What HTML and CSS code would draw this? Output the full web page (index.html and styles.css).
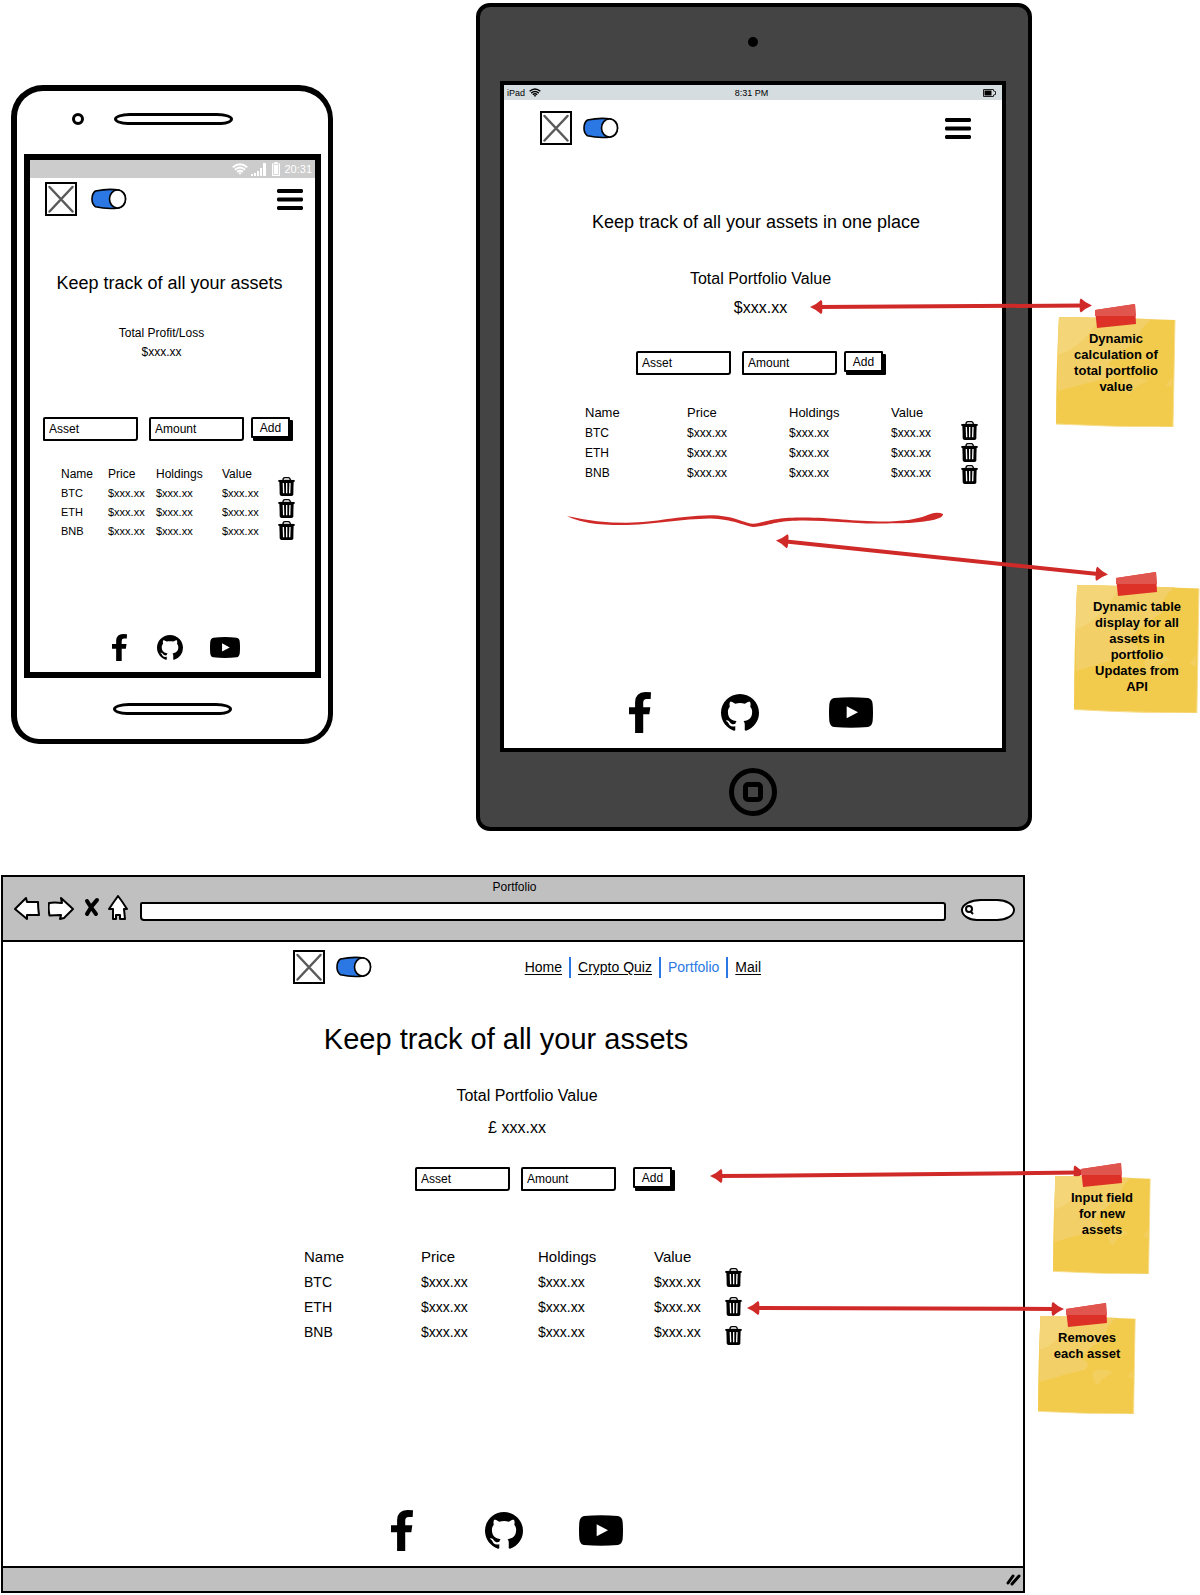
FILE: index.html
```html
<!DOCTYPE html>
<html lang="en">
<head>
<meta charset="utf-8">
<meta name="viewport" content="width=device-width, initial-scale=1">
<title>Portfolio wireframes</title>
<link rel="stylesheet" href="styles.css">
</head>
<body>
<svg class="sprite" aria-hidden="true">
  <symbol id="logo" viewBox="0 0 32 34">
    <path d="M1 1L31 1L31 33L1 33Z" fill="#fff" stroke="#000" stroke-width="2"/>
    <path d="M4.500 5L27.500 29.500M27.500 5L4.500 29.500" stroke="#5a5a5a" stroke-width="2.500" stroke-linecap="round"/>
  </symbol>
  <symbol id="switch" viewBox="0 0 36 22">
    <path d="M4.500 3Q17 .3 28 2Q34.500 4 34.500 11Q34.500 18 28 20Q16 21.500 4.500 18.800Q.9 16 1 11Q1 5.500 4.500 3Z" fill="#2b78e4" stroke="#000" stroke-width="1.600"/>
    <ellipse cx="26.500" cy="11" rx="8" ry="9" fill="#fff" stroke="#000" stroke-width="1.600"/>
  </symbol>
  <symbol id="bars" viewBox="0 0 26 21">
    <path d="M1 0H25L26 1V3L25 4H1L0 3V1ZM1 8.500H25L26 9.500V11.500L25 12.500H1L0 11.500V9.500ZM1 17H25L26 18V20L25 21H1L0 20V18Z"/>
  </symbol>
  <symbol id="trash" viewBox="0 0 51 57">
    <path d="M15 9Q15 2 21 2H31Q36 2 37 9" fill="none" stroke="#000" stroke-width="4"/>
    <path fill-rule="evenodd" d="M1 9Q25 7 50 9V14L47 15Q46 35 46 53Q44 57 40 57H11Q6 57 5 52Q5 32 4 15L1 14ZM14 18L15 49H19L18 18ZM24 18V49H28V18ZM34 18L33 49H37L38 18Z"/>
  </symbol>
  <symbol id="facebook" viewBox="0 0 65 123" preserveAspectRatio="none">
    <path d="M65 1L64 21H52Q42 21 42 32V46H63L60 67H42V123H18V67H0V46H18V30Q19 1 48 0Z"/>
  </symbol>
  <symbol id="github" viewBox="0 0 16 15.700" preserveAspectRatio="none">
    <path d="M8 0C3.580 0 0 3.580 0 8c0 3.540 2.290 6.530 5.470 7.590.4.070.55-.17.55-.38 0-.19-.01-.82-.01-1.490-2.010.37-2.530-.49-2.690-.94-.09-.23-.48-.94-.82-1.130-.28-.15-.68-.52-.01-.53.63-.01 1.080.58 1.230.82.72 1.210 1.870.87 2.330.66.07-.52.28-.87.51-1.070-1.780-.2-3.640-.89-3.640-3.950 0-.87.31-1.590.82-2.150-.08-.2-.36-1.020.08-2.120 0 0 .67-.21 2.200.82.64-.18 1.320-.27 2-.27.68 0 1.360.09 2 .27 1.530-1.040 2.200-.82 2.200-.82.44 1.100.16 1.920.08 2.120.51.56.82 1.270.82 2.150 0 3.070-1.870 3.750-3.650 3.950.29.25.54.73.54 1.480 0 1.070-.01 1.930-.01 2.200 0 .21.15.46.55.38A8.013 8.013 0 0016 8c0-4.420-3.580-8-8-8z"/>
  </symbol>
  <symbol id="youtube" viewBox="0 0 132 93" preserveAspectRatio="none">
    <path fill-rule="evenodd" d="M15 3Q66 -2 117 3Q130 5 131 22Q133 46 131 72Q129 88 117 90Q66 95 15 90Q3 89 1 72Q-1 46 1 22Q3 5 15 3ZM53 28V64L87 46Z"/>
  </symbol>
  <symbol id="wifi" viewBox="0 0 30 22">
    <path d="M1.500 8Q15 -4 28.500 8M5.500 12.500Q15 4 24.500 12.500M9.500 16.500Q15 12 20.500 16.500" fill="none" stroke="currentColor" stroke-width="3.600"/>
    <path d="M12 18.500Q15 16 18 18.500L15 22Z" fill="currentColor"/>
  </symbol>
  <symbol id="paper" viewBox="0 0 120 110" preserveAspectRatio="none">
    <path d="M3 0L60 1L119 3L117 110Q58 110 0 107Q0 55 3 0Z" fill="#f2ca4c"/>
    <path d="M3 0L96 2Q80 14 84 24Q60 36 52 48Q66 52 58 60Q30 66 2 74Q1 36 3 0Z" fill="#f3d067"/>
    <path d="M3 0L44 1Q32 22 12 34L2 38Z" fill="#f4d578"/>
    <path d="M68 62Q84 58 92 64Q76 70 74 78Q64 72 68 62ZM116 60V70L110 68Z" fill="#f3cf60"/>
    <path d="M0 107Q58 110 117 110L119 3" fill="none" stroke="#f7dd8c" stroke-width="1"/>
  </symbol>
  <symbol id="tape" viewBox="0 0 41 24">
    <path d="M0 6L40 0L41 20L2 24Z" fill="#dd3128"/>
    <path d="M0 6L40 0L41 12H0Z" fill="#e0564f"/>
  </symbol>
  <symbol id="head" viewBox="0 0 13 14" overflow="visible">
    <path d="M0 7Q7 4 11 0Q13 1 12 7Q13 13 11 14Q7 10 0 7Z"/>
  </symbol>
</svg>

<main class="board">
  <section class="row row--handheld">
    <article class="phone" aria-label="Phone wireframe">
      <div class="phone-top"><span class="phone-camera"></span><span class="phone-speaker"></span></div>
      <div class="screen">
        <div class="status status--phone">
          <svg class="status-wifi" aria-hidden="true"><use href="#wifi"/></svg>
          <svg class="status-signal" viewBox="0 0 15 13" aria-hidden="true"><path d="M0 11h2v2H0zM3 10h2v3H3zM6 8h2v5H6zM9 5h2v8H9zM12 0h3v13h-3z" fill="#fff"/></svg>
          <svg class="status-cell" viewBox="0 0 8 14" aria-hidden="true"><path d="M2.500 0h3v1.500H8V14H0V1.500h2.500z" fill="#fff"/><path d="M1.500 2.500H6.500V12.500H1.500Z" fill="none" stroke="#ccc" stroke-width=".7"/></svg>
          <span>20:31</span>
        </div>
        <header class="bar">
          <svg class="logo" role="img" aria-label="Logo"><use href="#logo"/></svg>
          <label class="toggle"><input type="checkbox" checked aria-label="Theme"><svg aria-hidden="true"><use href="#switch"/></svg></label>
          <button class="menu" aria-label="Menu"><svg aria-hidden="true"><use href="#bars"/></svg></button>
        </header>
        <h2 class="title">Keep track of all your assets</h2>
        <div class="totals"><p>Total Profit/Loss</p><p>$xxx.xx</p></div>
        <form class="entry">
          <input type="text" aria-label="Asset" value="Asset">
          <input type="text" aria-label="Amount" value="Amount">
          <button type="button">Add</button>
        </form>
        <div class="holdings">
          <table>
            <colgroup><col class="c1"><col class="c2"><col class="c3"><col class="c4"></colgroup>
            <thead><tr><th>Name</th><th>Price</th><th>Holdings</th><th>Value</th></tr></thead>
            <tbody>
              <tr><td>BTC</td><td>$xxx.xx</td><td>$xxx.xx</td><td>$xxx.xx</td></tr>
              <tr><td>ETH</td><td>$xxx.xx</td><td>$xxx.xx</td><td>$xxx.xx</td></tr>
              <tr><td>BNB</td><td>$xxx.xx</td><td>$xxx.xx</td><td>$xxx.xx</td></tr>
            </tbody>
          </table>
          <div class="bins">
            <button aria-label="Remove BTC"><svg aria-hidden="true"><use href="#trash"/></svg></button>
            <button aria-label="Remove ETH"><svg aria-hidden="true"><use href="#trash"/></svg></button>
            <button aria-label="Remove BNB"><svg aria-hidden="true"><use href="#trash"/></svg></button>
          </div>
        </div>
        <footer class="social">
          <a href="#" aria-label="Facebook"><svg class="fb"><use href="#facebook"/></svg></a>
          <a href="#" aria-label="GitHub"><svg class="gh"><use href="#github"/></svg></a>
          <a href="#" aria-label="YouTube"><svg class="yt"><use href="#youtube"/></svg></a>
        </footer>
      </div>
      <div class="phone-bottom"><span class="phone-speaker"></span></div>
    </article>

    <article class="tablet" aria-label="Tablet wireframe">
      <span class="tablet-camera"></span>
      <div class="screen">
        <div class="status status--tablet">
          <span class="carrier">iPad <svg class="status-wifi" aria-hidden="true"><use href="#wifi"/></svg></span>
          <span>8:31 PM</span>
          <svg class="status-battery" viewBox="0 0 13 8" aria-hidden="true"><path d="M.5.5H10.500V2L12.500 2.500V5.500L10.500 6V7.500H.5Z" fill="none" stroke="#222"/><path d="M1.500 1.500H8.500V6.500H1.500Z"/></svg>
        </div>
        <header class="bar">
          <svg class="logo" role="img" aria-label="Logo"><use href="#logo"/></svg>
          <label class="toggle"><input type="checkbox" checked aria-label="Theme"><svg aria-hidden="true"><use href="#switch"/></svg></label>
          <button class="menu" aria-label="Menu"><svg aria-hidden="true"><use href="#bars"/></svg></button>
        </header>
        <h2 class="title">Keep track of all your assets in one place</h2>
        <div class="totals"><p>Total Portfolio Value</p><p>$xxx.xx</p></div>
        <form class="entry">
          <input type="text" aria-label="Asset" value="Asset">
          <input type="text" aria-label="Amount" value="Amount">
          <button type="button">Add</button>
        </form>
        <div class="holdings">
          <table>
            <colgroup><col class="c1"><col class="c2"><col class="c3"><col class="c4"></colgroup>
            <thead><tr><th>Name</th><th>Price</th><th>Holdings</th><th>Value</th></tr></thead>
            <tbody>
              <tr><td>BTC</td><td>$xxx.xx</td><td>$xxx.xx</td><td>$xxx.xx</td></tr>
              <tr><td>ETH</td><td>$xxx.xx</td><td>$xxx.xx</td><td>$xxx.xx</td></tr>
              <tr><td>BNB</td><td>$xxx.xx</td><td>$xxx.xx</td><td>$xxx.xx</td></tr>
            </tbody>
          </table>
          <div class="bins">
            <button aria-label="Remove BTC"><svg aria-hidden="true"><use href="#trash"/></svg></button>
            <button aria-label="Remove ETH"><svg aria-hidden="true"><use href="#trash"/></svg></button>
            <button aria-label="Remove BNB"><svg aria-hidden="true"><use href="#trash"/></svg></button>
          </div>
        </div>
        <svg class="brace" viewBox="0 0 1130 46" preserveAspectRatio="none" aria-hidden="true">
          <path d="M0 12C60 26 120 33 180 33C270 32 330 12 430 10C500 10 525 32 558 36C600 32 610 18 700 17C800 16 850 30 970 29C1030 26 1060 20 1092 6Q1114 -2 1130 6Q1132 16 1104 24C1060 32 1040 35 960 35C860 38 800 25 700 26C620 28 610 42 560 46C530 42 500 22 430 20C340 22 280 36 180 40C100 40 50 36 0 12Z"/>
        </svg>
        <footer class="social">
          <a href="#" aria-label="Facebook"><svg class="fb"><use href="#facebook"/></svg></a>
          <a href="#" aria-label="GitHub"><svg class="gh"><use href="#github"/></svg></a>
          <a href="#" aria-label="YouTube"><svg class="yt"><use href="#youtube"/></svg></a>
        </footer>
      </div>
      <span class="home"></span>
    </article>

    <aside class="notes">
      <p class="note note--total"><svg class="note-paper" aria-hidden="true"><use href="#paper"/></svg><svg class="note-tape" aria-hidden="true"><use href="#tape"/></svg><span>Dynamic calculation of total portfolio value</span></p>
      <p class="note note--table"><svg class="note-paper" aria-hidden="true"><use href="#paper"/></svg><svg class="note-tape" aria-hidden="true"><use href="#tape"/></svg><span>Dynamic table display for all assets in portfolio Updates from API</span></p>
    </aside>

    <svg class="arrows" viewBox="0 0 1200 831" preserveAspectRatio="none" aria-hidden="true">
      <path d="M818 307L1084 305.500M786 541.500L1098 574"/>
      <use href="#head" x="810" y="300" width="13" height="14"/>
      <use href="#head" width="13" height="14" transform="translate(1092 305.500) rotate(180) translate(0 -7)"/>
      <use href="#head" width="13" height="14" transform="translate(776 540.500) rotate(4) translate(0 -7)"/>
      <use href="#head" width="13" height="14" transform="translate(1108 574.500) rotate(184) translate(0 -7)"/>
    </svg>
  </section>

  <section class="row row--desktop">
    <article class="browser" aria-label="Browser wireframe">
      <div class="chrome">
        <p class="tab-title">Portfolio</p>
        <div class="toolbar">
          <svg class="tool" viewBox="0 0 26 25" aria-hidden="true"><path d="M1 13L12 2L13 6L24 6Q24 12 25 19L13 19L13 23Z"/></svg>
          <svg class="tool" viewBox="0 0 26 25" aria-hidden="true"><path d="M25 13L13 2L14 7Q6 6 1 7Q0 12 1.500 19.500Q7 19 13 19L12 23L16 22Z"/></svg>
          <svg class="tool tool--stop" viewBox="0 0 18 25" aria-hidden="true"><path d="M5 5Q8 10 14 18M15 4Q9 10 5 18"/></svg>
          <svg class="tool tool--home" viewBox="0 0 20 26" aria-hidden="true"><path d="M10 1Q5 8 1 14L5 14L5 24H8V20H12V24H17L16 14L19 14Q14 6 10 1Z"/></svg>
          <input class="address" type="text" aria-label="Address">
          <label class="search"><svg viewBox="0 0 10 12" aria-hidden="true"><circle cx="4" cy="5" r="3"/><path d="M6 8L8 10"/></svg><input type="search" aria-label="Search"></label>
        </div>
      </div>
      <div class="page">
        <div class="page-inner">
          <header class="bar">
            <svg class="logo" role="img" aria-label="Logo"><use href="#logo"/></svg>
            <label class="toggle"><input type="checkbox" checked aria-label="Theme"><svg aria-hidden="true"><use href="#switch"/></svg></label>
            <nav class="links">
              <a href="#">Home</a><a href="#">Crypto Quiz</a><a class="current" href="#" aria-current="page">Portfolio</a><a href="#">Mail</a>
            </nav>
          </header>
          <h1 class="title">Keep track of all your assets</h1>
          <div class="totals"><p>Total Portfolio Value</p><p class="worth">£ xxx.xx</p></div>
          <form class="entry">
            <input type="text" aria-label="Asset" value="Asset">
            <input type="text" aria-label="Amount" value="Amount">
            <button type="button">Add</button>
          </form>
          <div class="holdings">
            <table>
              <colgroup><col class="c1"><col class="c2"><col class="c3"><col class="c4"></colgroup>
              <thead><tr><th>Name</th><th>Price</th><th>Holdings</th><th>Value</th></tr></thead>
              <tbody>
                <tr><td>BTC</td><td>$xxx.xx</td><td>$xxx.xx</td><td>$xxx.xx</td></tr>
                <tr><td>ETH</td><td>$xxx.xx</td><td>$xxx.xx</td><td>$xxx.xx</td></tr>
                <tr><td>BNB</td><td>$xxx.xx</td><td>$xxx.xx</td><td>$xxx.xx</td></tr>
              </tbody>
            </table>
            <div class="bins">
              <button aria-label="Remove BTC"><svg aria-hidden="true"><use href="#trash"/></svg></button>
              <button aria-label="Remove ETH"><svg aria-hidden="true"><use href="#trash"/></svg></button>
              <button aria-label="Remove BNB"><svg aria-hidden="true"><use href="#trash"/></svg></button>
            </div>
          </div>
          <footer class="social">
            <a href="#" aria-label="Facebook"><svg class="fb"><use href="#facebook"/></svg></a>
            <a href="#" aria-label="GitHub"><svg class="gh"><use href="#github"/></svg></a>
            <a href="#" aria-label="YouTube"><svg class="yt"><use href="#youtube"/></svg></a>
          </footer>
        </div>
      </div>
      <div class="statusbar"><svg viewBox="0 0 15 12" aria-hidden="true"><path d="M2 9L7 2M6 10L13 2"/></svg></div>
    </article>

    <aside class="notes">
      <p class="note note--input"><svg class="note-paper" aria-hidden="true"><use href="#paper"/></svg><svg class="note-tape" aria-hidden="true"><use href="#tape"/></svg><span>Input field for new assets</span></p>
      <p class="note note--remove"><svg class="note-paper" aria-hidden="true"><use href="#paper"/></svg><svg class="note-tape" aria-hidden="true"><use href="#tape"/></svg><span>Removes each asset</span></p>
    </aside>

    <svg class="arrows" viewBox="0 0 1200 719" preserveAspectRatio="none" aria-hidden="true">
      <path d="M718 301.500L1078 298M756 433.500L1056 434.500"/>
      <use href="#head" x="710" y="294.500" width="13" height="14"/>
      <use href="#head" width="13" height="14" transform="translate(1086 298) rotate(180) translate(0 -7)"/>
      <use href="#head" x="747" y="426.500" width="13" height="14"/>
      <use href="#head" width="13" height="14" transform="translate(1064 434.500) rotate(180) translate(0 -7)"/>
    </svg>
  </section>
</main>
</body>
</html>
```
FILE: styles.css
```css
*, *::before { box-sizing: border-box; }

body {
  margin: 0;
  background: #fff;
  color: #000;
  font-family: "Liberation Sans", Arial, sans-serif;
  font-size: 12px;
}

h1, h2, p { margin: 0; font-weight: 400; }
svg { display: block; }
button, input { font: inherit; color: inherit; border-radius: 0; }
button { background: none; border: 0; padding: 0; cursor: pointer; }
a { color: inherit; }
.sprite { position: absolute; width: 0; height: 0; }

/* Board rows */
.board { display: flex; flex-direction: column; gap: 44px; padding-bottom: 1px; }
.row { position: relative; display: grid; align-items: start; }
.row--handheld {
  grid-template-columns: minmax(0, 322fr) minmax(0, 143fr) minmax(0, 556fr) minmax(0, 168fr);
  padding-left: 11px;
}
.row--desktop { grid-template-columns: minmax(0, 1024fr) minmax(0, 175fr); padding-left: 1px; }

/* Devices */
.screen { background: #fff; border: 4px solid #000; }

.phone {
  margin-top: 85px;
  background: #fff;
  border: 6px solid #000;
  border-width: 6px 5px 5px 6px;
  border-radius: 32px 34px 30px 28px;
}
.phone .screen { margin: 0 7px; border-width: 6px; }
.phone-top { display: flex; align-items: flex-start; gap: 30px; padding: 22px 0 29px 55px; }
.phone-camera { width: 12px; height: 12px; border: 3px solid #000; border-radius: 50%; }
.phone-speaker { width: 119px; height: 12px; border: 3px solid #000; border-radius: 16px 16px 12px 14px / 6px; }
.phone-bottom { display: flex; justify-content: center; padding: 25px 0 24px; }

.tablet {
  grid-column: 3;
  display: flex;
  flex-direction: column;
  align-items: center;
  margin-top: 3px;
  padding: 30px 22px 11px 20px;
  background: #444;
  border: 4px solid #000;
  border-radius: 14px;
}
.tablet .screen { align-self: stretch; margin: 34px 0 16px; }
.tablet-camera { width: 10px; height: 10px; border-radius: 50%; background: #000; }
.home { display: grid; place-items: center; width: 48px; height: 48px; border: 5px solid #000; border-radius: 50%; }
.home::before { content: ""; width: 20px; height: 20px; border: 5px solid #000; border-radius: 5px; }

/* Status strips */
.status { display: flex; align-items: center; }
.status--phone { justify-content: flex-end; gap: 3px; height: 18px; padding-right: 3px; background: #ccc; color: #fff; font-size: 11px; }
.status--phone .status-wifi { width: 16px; height: 12px; }
.status-signal { width: 15px; height: 13px; }
.status-cell { width: 8px; height: 14px; margin: 0 1px 0 3px; }
.status--tablet { display: grid; grid-template-columns: 1fr auto 1fr; height: 15px; padding: 0 6px 0 3px; background: #d6dde0; font-size: 9px; }
.carrier { display: flex; align-items: center; gap: 4px; }
.status--tablet .status-wifi { width: 12px; height: 9px; }
.status-battery { width: 13px; height: 8px; justify-self: end; }

/* App header */
.bar { display: flex; align-items: center; gap: 11px; }
.logo { width: 32px; height: 34px; }
.toggle { position: relative; width: 36px; height: 22px; }
.toggle input { position: absolute; inset: 0; margin: 0; opacity: 0; }
.toggle svg { width: 36px; height: 22px; }
.menu { margin-left: auto; }
.menu svg { width: 26px; height: 21px; }
.phone .bar { gap: 14px; padding: 4px 12px 0 15px; }
.tablet .bar { padding: 11px 31px 0 36px; }

/* Text blocks */
.title, .totals { text-align: center; }
.title { font-size: 18px; line-height: 24px; }
.totals { font-size: 16px; }
.phone .title { padding: 55px 6px 0 0; }
.phone .totals { padding: 29px 22px 0 0; font-size: 12px; line-height: 19px; }
.tablet .title { padding: 65px 0 0 6px; }
.tablet .totals { padding: 30px 0 0 15px; line-height: 29px; }
.browser .title { padding: 37px 42px 0 0; font-size: 29px; line-height: 36px; }
.browser .totals { padding-top: 23px; line-height: 32px; }
.worth { padding-right: 20px; }

/* Entry form */
.entry { display: flex; align-items: flex-start; }
.entry input {
  width: 95px;
  height: 24px;
  margin-right: 11px;
  padding: 0 4px 1px;
  background: #fff;
  border: 2px solid #000;
  border-radius: 2px 1px 3px 1px;
}
.entry input + input { margin-right: 7px; }
.entry button {
  width: 39px;
  height: 21px;
  background: #fff;
  border: 2px solid #000;
  border-radius: 2px 1px 1px 1px;
  box-shadow: 2px 3px 0 #000, 3px 3px 0 #000;
}
.phone .entry { padding: 55px 0 0 13px; }
.tablet .entry { padding: 29px 0 0 132px; }
.browser .entry { padding: 23px 0 0 122px; }
.browser .entry input + input { margin-right: 17px; }

/* Holdings table and its remove buttons */
.holdings { display: flex; align-items: flex-start; }
table { border-collapse: collapse; table-layout: fixed; }
th, td { padding: 0; font-weight: 400; text-align: left; }
.bins { display: flex; flex-direction: column; gap: 3px; }
.bins svg { width: 17px; height: 19px; }

.phone .holdings { padding: 24px 0 0 31px; }
.phone table { width: 217px; font-size: 11px; line-height: 19px; }
.phone th { font-size: 12px; }
.phone .c1 { width: 47px; }
.phone .c2 { width: 48px; }
.phone .c3 { width: 66px; }
.phone .c4 { width: 56px; }
.phone .bins { padding-top: 12px; }

.tablet .holdings { padding: 28px 0 0 81px; }
.tablet table { width: 376px; font-size: 12px; line-height: 20px; }
.tablet th { font-size: 13px; }
.tablet .c1, .tablet .c2, .tablet .c3 { width: 102px; }
.tablet .c4 { width: 70px; }
.tablet .bins { padding-top: 18px; }

.browser .holdings { padding: 53px 0 0 11px; }
.browser table { width: 421px; font-size: 14px; line-height: 26px; }
.browser tbody { line-height: 25px; }
.browser th { font-size: 15px; }
.browser .c1, .browser .c2 { width: 117px; }
.browser .c3 { width: 116px; }
.browser .c4 { width: 71px; }
.browser .bins { gap: 10px; padding-top: 24px; }

.brace { width: 376px; height: 15px; margin: 28px 0 0 63px; fill: #d02a28; }

/* Social links */
.social { display: flex; justify-content: center; align-items: center; }
.fb { width: 22px; height: 41px; }
.gh { width: 38px; height: 37px; }
.yt { width: 44px; height: 31px; }
.phone .social { gap: 27px; padding: 93px 0 11px 6px; }
.phone .fb { width: 15px; height: 27px; margin-right: 3px; }
.phone .gh { width: 26px; height: 25px; }
.phone .yt { width: 30px; height: 21px; }
.tablet .social { gap: 70px; padding: 165px 4px 15px 0; }
.browser .social { gap: 56px; padding: 165px 40px 15px 0; }
.browser .fb { margin-right: 16px; }

/* Browser window */
.browser { border: 2px solid #000; background: #fff; }
.chrome { padding: 2px 8px 19px 11px; background: #c0c0c0; border-bottom: 2px solid #000; }
.tab-title { line-height: 16px; text-align: center; }
.toolbar { display: flex; align-items: flex-end; gap: 8px; height: 26px; }
.tool { width: 26px; height: 25px; fill: #fff; stroke: #000; stroke-width: 2; stroke-linejoin: round; }
.tool--stop { width: 18px; fill: none; stroke-width: 4; stroke-linecap: round; }
.tool--home { width: 20px; height: 26px; }
.address { flex: 1; min-width: 0; height: 19px; margin: 0 7px 0 4px; background: #fff; border: 2px solid #000; border-radius: 2px 3px 3px 4px; }
.search { display: flex; align-items: center; width: 54px; height: 22px; padding-left: 2px; background: #fff; border: 2px solid #000; border-radius: 20px 18px 18px 16px / 11px; }
.search svg { width: 10px; height: 12px; fill: none; stroke: #000; stroke-width: 2; }
.search input { flex: 1; min-width: 0; height: 12px; padding: 0; border: 0; background: none; }

.page { padding: 8px 0 0 28px; }
.page-inner { max-width: 468px; margin: 0 auto; }
.links { display: flex; align-items: center; margin-left: auto; font-size: 14px; line-height: 21px; }
.links a + a { margin-left: 7px; padding-left: 7px; border-left: 2px solid #2b78e4; }
.links .current { color: #2b78e4; text-decoration: none; }
.links a { text-underline-offset: 2px; }

.statusbar { display: flex; justify-content: flex-end; align-items: center; height: 25px; padding-right: 2px; background: #c0c0c0; border-top: 2px solid #000; }
.statusbar svg { width: 15px; height: 12px; fill: none; stroke: #000; stroke-width: 3; stroke-linecap: round; }

/* Sticky notes */
.notes { position: relative; z-index: 2; display: flex; flex-direction: column; align-items: flex-start; }
.row--handheld .notes { gap: 158px; padding-top: 317px; }
.row--desktop .notes { gap: 42px; padding-top: 301px; }
.note { position: relative; width: 98px; min-height: 98px; padding: 14px 15px 18px; font-size: 13px; font-weight: 700; line-height: 16px; text-align: center; }
.note span { position: relative; }
.note-paper { position: absolute; inset: 0; width: 100%; height: 100%; }
.note-tape { position: absolute; top: -13px; left: 50%; width: 41px; height: 24px; margin-left: -21px; }
.note--total { width: 120px; min-height: 110px; margin-left: 24px; }
.note--table { width: 126px; margin-left: 42px; }
.note--input { margin-left: 28px; }
.note--remove { margin-left: 13px; }

.arrows { position: absolute; inset: 0; z-index: 1; width: 100%; height: 100%; fill: #d02a28; stroke: none; pointer-events: none; }
.arrows > path { stroke: #d02a28; stroke-width: 4; }
```
